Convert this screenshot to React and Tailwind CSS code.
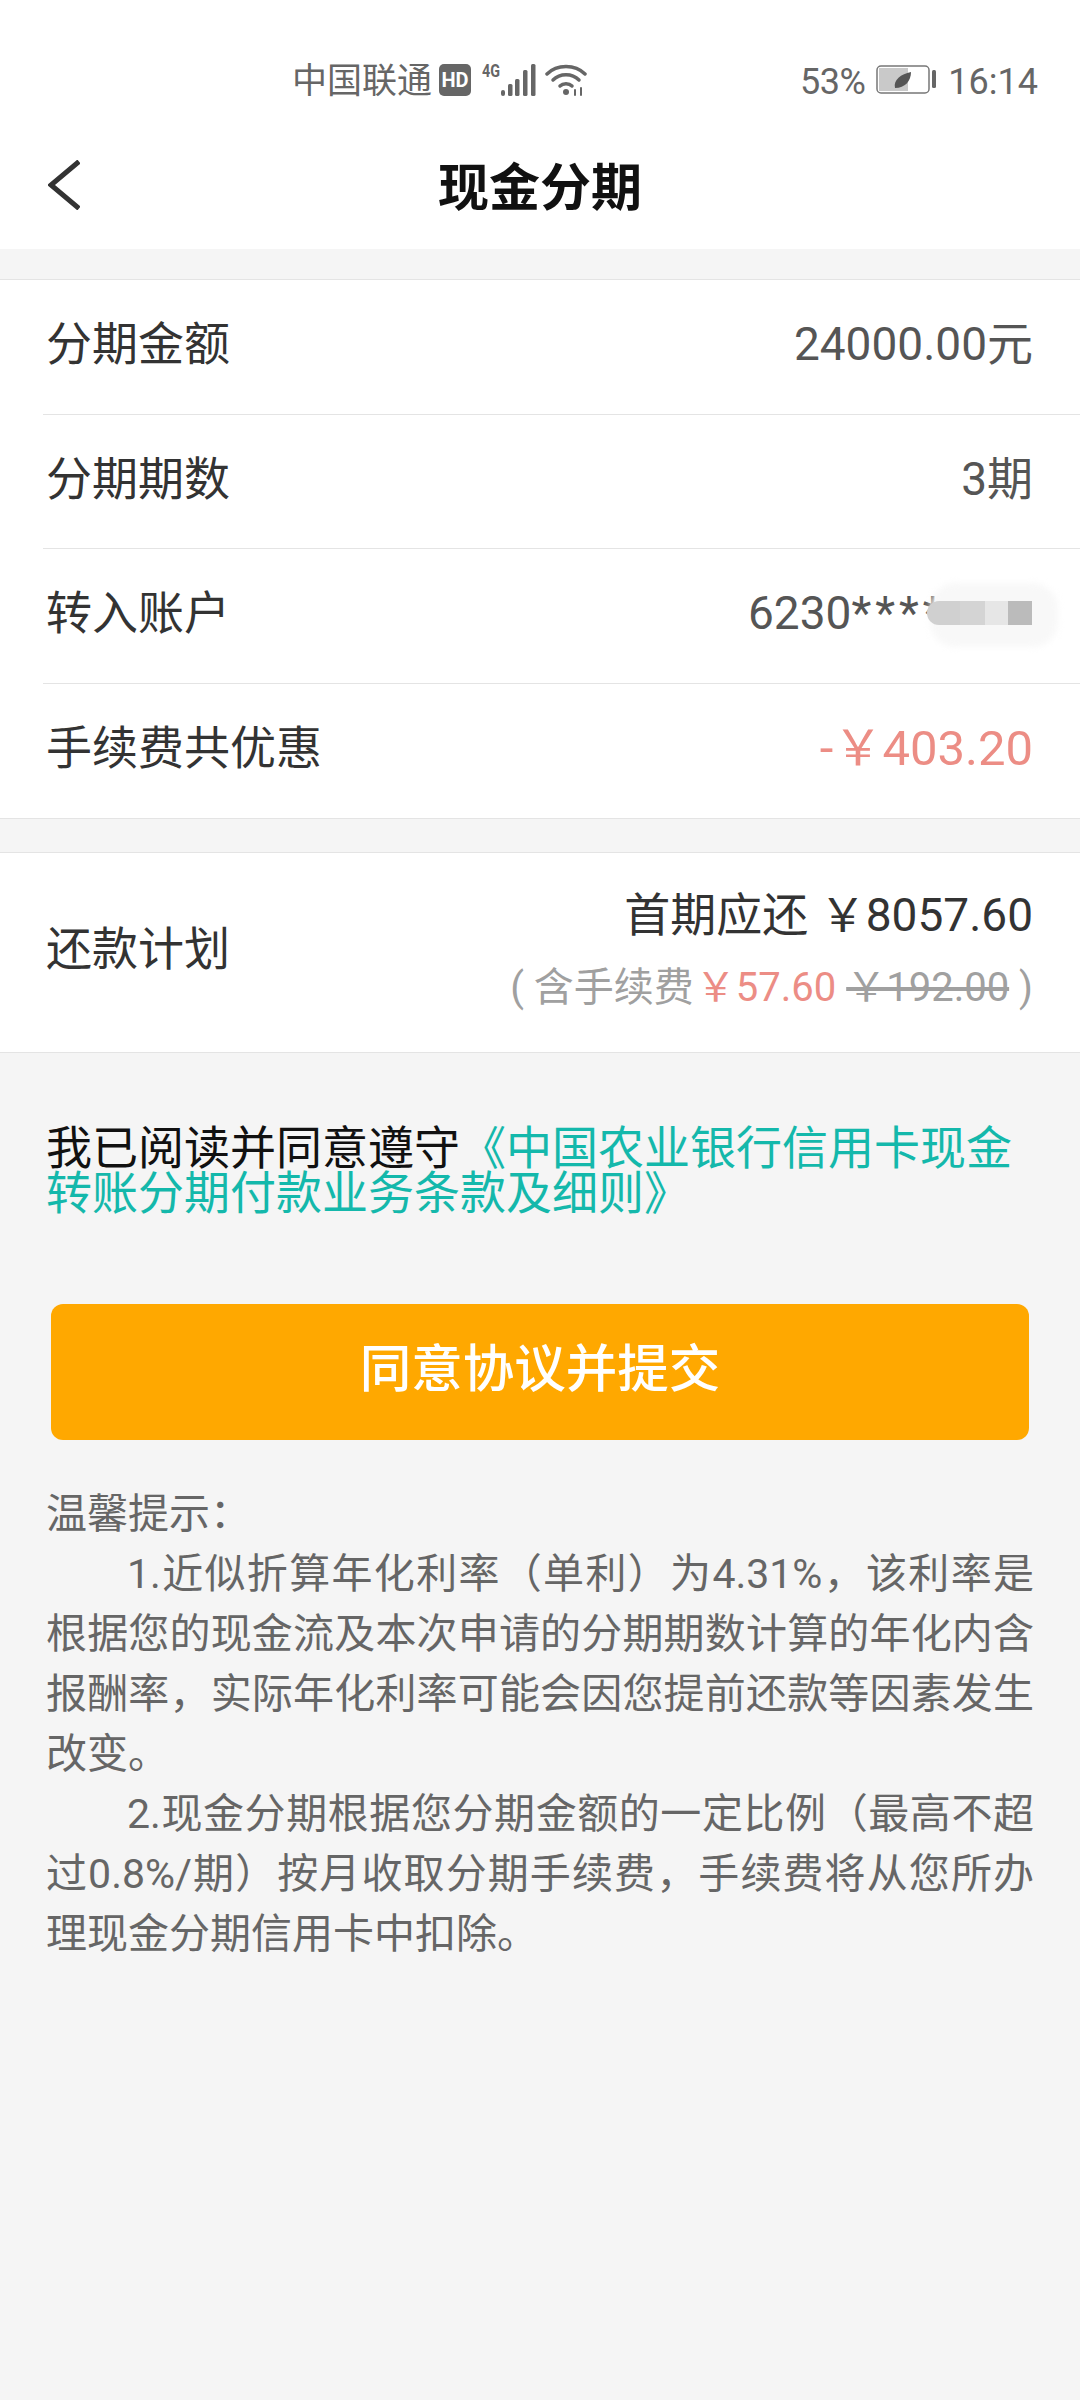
import React from "react";

const font = { fontFamily: '"Roboto", "Noto Sans CJK SC", sans-serif' };

// status bar glyphs
const Signal = () => (
  <svg width="54" height="40" viewBox="0 0 54 40">
    <text x="0" y="19" fontSize="18" fontWeight="700" fill="#666" fontFamily="Roboto" textLength="18" lengthAdjust="spacingAndGlyphs">4G</text>
    <rect x="19" y="32" width="4" height="6" rx="2" fill="#666" />
    <rect x="26" y="26" width="4.500" height="12" rx="1.500" fill="#666" />
    <rect x="33" y="21" width="4.500" height="17" rx="1.500" fill="#666" />
    <rect x="41" y="12" width="4.500" height="26" rx="1.500" fill="#666" />
    <rect x="49" y="6" width="4.500" height="32" rx="1.500" fill="#666" />
  </svg>
);

const Wifi = () => (
  <svg width="42" height="32" viewBox="0 0 42 32" fill="none" stroke="#666" strokeWidth="3.500" strokeLinecap="round">
    <path d="M2 10C12 0 30 0 40 10" />
    <path d="M8 16C15 9 27 9 34 16" />
    <path d="M15 22C18 19 24 19 27 22" />
    <circle cx="21" cy="28" r="3" fill="#666" stroke="none" />
    <path d="M30 26V31M36 24V31" strokeWidth="2" />
  </svg>
);

const Battery = () => (
  <svg width="60" height="30" viewBox="0 0 60 30">
    <rect x="1" y="1" width="52" height="27" rx="4" fill="#fff" stroke="#777" strokeWidth="1.500" />
    <rect x="3" y="3" width="29" height="23" fill="#c9c9c9" />
    <path d="M19 23C17 15 25 9 35 7C35 16 29 23 19 23Z" fill="#555" />
    <rect x="56" y="5" width="4" height="18" rx="1.500" fill="#666" />
  </svg>
);

const Row = ({ label, children }) => (
  <div className="ml-[43px] h-[134.5px] flex items-center justify-between pr-[47px] pb-[4px] border-b border-[#e4e4e4] last:border-b-0">
    <span className="text-[46px] text-[#333] ml-[3px]">{label}</span>
    {children}
  </div>
);

export default function App() {
  return (
    <div className="w-[1080px] h-[2400px] bg-[#f5f5f5] overflow-hidden" style={font}>
      {/* status bar */}
      <div className="h-[125px] bg-white flex items-start pl-[292px] pr-[42px] text-[#666]">
        <span className="mt-[59px] text-[35px] leading-[46px]">中国联通</span>
        <span className="ml-[7px] mt-[64px] w-[32px] h-[32px] rounded-[5px] bg-[#666] text-white text-[20px] font-bold flex items-center justify-center">HD</span>
        <span className="ml-[11px] mt-[58px]"><Signal /></span>
        <span className="ml-[9px] mt-[64px]"><Wifi /></span>
        <span className="ml-auto mt-[59px] text-[36px] leading-[46px] tracking-[-0.5px]">53%</span>
        <span className="ml-[11px] mt-[65px]"><Battery /></span>
        <span className="ml-[12px] mt-[59px] text-[36px] leading-[46px]">16:14</span>
      </div>

      {/* title */}
      <div className="h-[124px] bg-white relative flex items-center justify-center">
        <svg className="absolute left-[48px] top-[35px]" width="32" height="50" viewBox="0 0 32 50" fill="none" stroke="#333" strokeWidth="5">
          <path d="M31 1.500L3 25L31 48.500" />
        </svg>
        <span className="text-[51px] font-bold text-[#111] mt-[4px]">现金分期</span>
      </div>

      {/* details */}
      <div className="mt-[30px] bg-white border-y border-[#e4e4e4]">
        <Row label="分期金额">
          <span className="text-[46px] text-[#555]">24000.00元</span>
        </Row>
        <Row label="分期期数">
          <span className="text-[46px] text-[#555]">3期</span>
        </Row>
        <Row label="转入账户">
          <span className="relative text-[46px] text-[#555] w-[285px] whitespace-nowrap">
            6230<span className="tracking-[4px]">****</span>
            <span className="absolute left-[182px] top-[4px] w-[128px] h-[64px] rounded-[26px] bg-[#f8f8f8] blur-[3px]" />
            <span className="absolute left-[179px] top-[22px] w-[33px] h-[24px] rounded-l-[12px] bg-[#d0d0d0]" />
            <span className="absolute left-[212px] top-[22px] w-[25px] h-[24px] bg-[#d4d4d4]" />
            <span className="absolute left-[237px] top-[22px] w-[23px] h-[24px] bg-[#e6e6e6]" />
            <span className="absolute left-[260px] top-[22px] w-[24px] h-[24px] bg-[#bbbbbb]" />
          </span>
        </Row>
        <Row label="手续费共优惠">
          <span className="text-[49px] text-[#ec8d85]">-￥403.20</span>
        </Row>
      </div>

      {/* plan */}
      <div className="mt-[33px] h-[201px] bg-white border-y border-[#e4e4e4] flex items-center justify-between pl-[46px] pr-[47px]">
        <span className="text-[46px] text-[#333] -mt-[6px]">还款计划</span>
        <div className="flex flex-col items-end -mt-[7px]">
          <span className="text-[46px] leading-[64px] text-[#333]">首期应还 ￥8057.60</span>
          <span className="mt-[14px] text-[40px] leading-[54px] text-[#a0a0a0] whitespace-nowrap">
            ( 含手续费<span className="ml-[2px] text-[#ec8d85]">￥57.60</span> <span className="line-through">￥192.00</span> )
          </span>
        </div>
      </div>

      {/* agreement */}
      <p className="mt-[73px] px-[46px] text-[46px] leading-[45px] text-[#111]">
        我已阅读并同意遵守<span className="text-[#14b8ab]">《中国农业银行信用卡现金转账分期付款业务条款及细则》</span>
      </p>

      <button className="block mt-[88px] mx-auto w-[978px] h-[136px] pb-[5px] rounded-[12px] bg-[#ffa800] text-white text-[51.500px] font-medium">
        同意协议并提交
      </button>

      {/* tips */}
      <div className="mt-[44px] px-[46px] text-[41px] leading-[60px] text-[#666] text-justify">
        <p>温馨提示：</p>
        <p className="indent-[81px]">1.近似折算年化利率（单利）为4.31%，该利率是根据您的现金流及本次申请的分期期数计算的年化内含报酬率，实际年化利率可能会因您提前还款等因素发生改变。</p>
        <p className="indent-[81px]">2.现金分期根据您分期金额的一定比例（最高不超过0.8%/期）按月收取分期手续费，手续费将从您所办理现金分期信用卡中扣除。</p>
      </div>
    </div>
  );
}
